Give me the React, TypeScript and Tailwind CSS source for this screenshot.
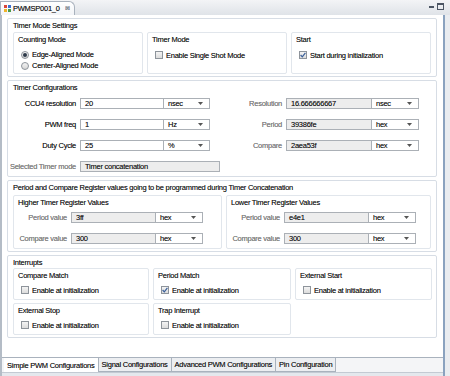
import React from 'react';

const font = { fontFamily: '"Liberation Sans", Arial, sans-serif' };

const Check = ({ checked }: { checked?: boolean }) => (
  <span className="w-[8px] h-[8px] border border-[#8e949b] bg-gradient-to-b from-[#f4f4f4] to-[#dcdcdc] flex items-center justify-center shrink-0">
    {checked && (
      <svg width="6" height="6" viewBox="0 0 6 6">
        <path d="M0.6 3 L2.3 4.8 L5.4 0.8" stroke="#3a5f9a" strokeWidth="1.2" fill="none" />
      </svg>
    )}
  </span>
);

const Radio = ({ checked }: { checked?: boolean }) => (
  <span className="w-[8px] h-[8px] rounded-full border border-[#8e949b] bg-gradient-to-b from-[#f4f4f4] to-[#d6d6d6] flex items-center justify-center shrink-0">
    {checked && <span className="w-[4px] h-[4px] rounded-full bg-[#2e3a4a]" />}
  </span>
);

const Arrow = () => (
  <svg width="5" height="3" viewBox="0 0 5 3" className="shrink-0">
    <path d="M0 0 L5 0 L2.5 3 Z" fill="#555" />
  </svg>
);

const Field = ({ value, readOnly, w }: { value: string; readOnly?: boolean; w: string }) => (
  <div className={`${w} h-[11px] border border-[#abb0b6] flex items-center pl-[4px] text-[#1e1e1e] shrink-0 ${readOnly ? 'bg-[#ededed]' : 'bg-white'}`}>
    {value}
  </div>
);

const Select = ({ value, w }: { value: string; w: string }) => (
  <div className={`${w} h-[11px] border border-[#abb0b6] border-l-0 bg-white flex items-center justify-between pl-[4px] pr-[6px] text-[#1e1e1e] shrink-0`}>
    <span>{value}</span>
    <Arrow />
  </div>
);

const Label = ({ text, w, gray }: { text: string; w: string; gray?: boolean }) => (
  <div className={`${w} flex justify-end pr-[4px] whitespace-nowrap shrink-0 ${gray ? 'text-[#8a8a8a]' : ''}`}>
    <span>{text}</span>
  </div>
);

const Section = ({ title, className, children }: { title: string; className: string; children: React.ReactNode }) => (
  <div className={`border border-[#d7dde5] rounded-[2px] px-[5px] ${className}`}>
    <div className="h-[9px] leading-[9px] mt-[2px] text-[#1e1e1e]">{title}</div>
    {children}
  </div>
);

const Group = ({ title, className, children }: { title: string; className: string; children?: React.ReactNode }) => (
  <div className={`border border-[#e1e6ec] rounded-[2px] pl-[4px] ${className}`}>
    <div className="h-[9px] leading-[9px] mt-[2px] text-[#1e1e1e]">{title}</div>
    {children}
  </div>
);

const CheckRow = ({ label, checked, className }: { label: string; checked?: boolean; className: string }) => (
  <div className={`flex items-center gap-[3px] h-[10px] ${className}`}>
    <Check checked={checked} />
    <span>{label}</span>
  </div>
);

export default function App() {
  return (
    <div
      className="w-[450px] h-[376px] bg-[#e9ecf0] flex flex-col text-[7.5px] leading-[9px] tracking-[-0.25px] text-[#1a1a1a] overflow-hidden [text-shadow:0_0_0.4px_rgba(0,0,0,0.55)]"
      style={font}
    >
      {/* top tab strip */}
      <div className="h-[15px] flex items-end bg-gradient-to-b from-[#f3f4f6] to-[#dfe3e8] shrink-0 relative">
        <div className="h-[14px] w-[75px] bg-gradient-to-b from-white to-[#f2f4f7] border border-b-0 border-[#a9b2bd] rounded-tr-[6px] flex items-center pl-[3px] gap-[2px]">
          <svg width="7" height="7" viewBox="0 0 7 7">
            <rect x="0" y="0" width="3" height="3" fill="#d9443a" />
            <rect x="4" y="0" width="3" height="3" fill="#3a6fd0" />
            <rect x="0" y="4" width="3" height="3" fill="#f0b429" />
            <rect x="4" y="4" width="3" height="3" fill="#4a9a4a" />
          </svg>
          <span>PWMSP001_0</span>
          <span className="text-[#7a8896] text-[6px] ml-[3px]">⊠</span>
        </div>
        <div className="absolute right-[6px] top-[3px] flex items-center gap-[3px]">
          <span className="w-[5px] h-[2px] bg-[#4b5563]" />
          <span className="w-[7px] h-[7px] border border-[#4b5563] border-t-2" />
        </div>
      </div>

      {/* body */}
      <div className="flex-1 mr-[5px] bg-white border-l-2 border-r-2 border-l-[#b4bcc6] border-r-[#8aa2bf] flex flex-col">
        <div className="pl-[5px] pr-[6px] pt-[3px] flex flex-col gap-[3px]">
          {/* Timer Mode Settings */}
          <Section title="Timer Mode Settings" className="h-[59px]">
            <div className="flex gap-[4px] mt-[2px]">
              <Group title="Counting Mode" className="w-[130px] h-[42px]">
                <div className="flex items-center gap-[3px] mt-[6px] ml-[3px]">
                  <Radio checked />
                  <span>Edge-Aligned Mode</span>
                </div>
                <div className="flex items-center gap-[3px] mt-[2px] ml-[3px]">
                  <Radio />
                  <span>Center-Aligned Mode</span>
                </div>
              </Group>
              <Group title="Timer Mode" className="w-[140px] h-[42px]">
                <CheckRow label="Enable Single Shot Mode" className="mt-[6px] ml-[3px]" />
              </Group>
              <Group title="Start" className="w-[140px] h-[42px]">
                <CheckRow label="Start during initialization" checked className="mt-[6px] ml-[3px]" />
              </Group>
            </div>
          </Section>

          {/* Timer Configurations */}
          <Section title="Timer Configurations" className="h-[97px]">
            <div className="flex mt-[6px]">
              <div className="flex flex-col gap-[10px]">
                {[
                  ['CCU4 resolution', '20', 'nsec'],
                  ['PWM freq', '1', 'Hz'],
                  ['Duty Cycle', '25', '%'],
                ].map(([l, v, u]) => (
                  <div key={l} className="flex items-center">
                    <Label text={l} w="w-[67px]" />
                    <Field value={v} w="w-[84px]" />
                    <Select value={u} w="w-[46px]" />
                  </div>
                ))}
                <div className="flex items-center">
                  <Label text="Selected Timer mode" w="w-[67px]" gray />
                  <Field value="Timer concatenation" readOnly w="w-[140px]" />
                </div>
              </div>
              <div className="flex flex-col gap-[10px] ml-[5px]">
                {[
                  ['Resolution', '16.666666667', 'nsec'],
                  ['Period', '39386fe', 'hex'],
                  ['Compare', '2aea53f', 'hex'],
                ].map(([l, v, u]) => (
                  <div key={l} className="flex items-center">
                    <Label text={l} w="w-[61px]" gray />
                    <Field value={v} readOnly w="w-[86px]" />
                    <Select value={u} w="w-[47px]" />
                  </div>
                ))}
              </div>
            </div>
          </Section>

          {/* Register values */}
          <Section title="Period and Compare Register values going to be programmed during Timer Concatenation" className="h-[72px]">
            <div className="flex gap-[4px] mt-[3px]">
              {[
                ['Higher Timer Register Values', '3ff', 'w-[210px]'],
                ['Lower Timer Register Values', 'e4e1', 'w-[206px]'],
              ].map(([t, p, w]) => (
                <Group key={t} title={t} className={`${w} h-[54px]`}>
                  <div className="flex flex-col gap-[10px] mt-[5px]">
                    {[
                      ['Period value', p],
                      ['Compare value', '300'],
                    ].map(([l, v]) => (
                      <div key={l} className="flex items-center">
                        <Label text={l} w="w-[53px]" gray />
                        <Field value={v} readOnly w="w-[85px]" />
                        <Select value="hex" w="w-[47px]" />
                      </div>
                    ))}
                  </div>
                </Group>
              ))}
            </div>
          </Section>

          {/* Interrupts */}
          <Section title="Interrupts" className="h-[83px]">
            <div className="grid grid-cols-[136px_138px_137px] gap-x-[4px] gap-y-[3px] mt-[1px]">
              {[
                ['Compare Match', false],
                ['Period Match', true],
                ['External Start', false],
                ['External Stop', false],
                ['Trap Interrupt', false],
              ].map(([t, c]) => (
                <Group key={t as string} title={t as string} className="h-[32px]">
                  <CheckRow label="Enable at initialization" checked={c as boolean} className="mt-[5px] ml-[3px]" />
                </Group>
              ))}
            </div>
          </Section>
        </div>

        <div className="flex-1" />

        {/* bottom tabs */}
        <div className="h-[15px] border-t border-[#a9b2bd] flex items-stretch pl-[2px] bg-[#f4f5f7]">
          {['Simple PWM Configurations', 'Signal Configurations', 'Advanced PWM Configurations', 'Pin Configuration'].map((t, i) => (
            <div
              key={t}
              className={`px-[3px] flex items-center border-r border-[#a9b2bd] whitespace-nowrap ${i === 0 ? 'bg-white' : 'bg-[#eceef1] border-b'}`}
            >
              {t}
            </div>
          ))}
        </div>
        <div className="h-[4px] bg-[#e4e8ed] border-t border-[#c3cad3]" />
      </div>
    </div>
  );
}
